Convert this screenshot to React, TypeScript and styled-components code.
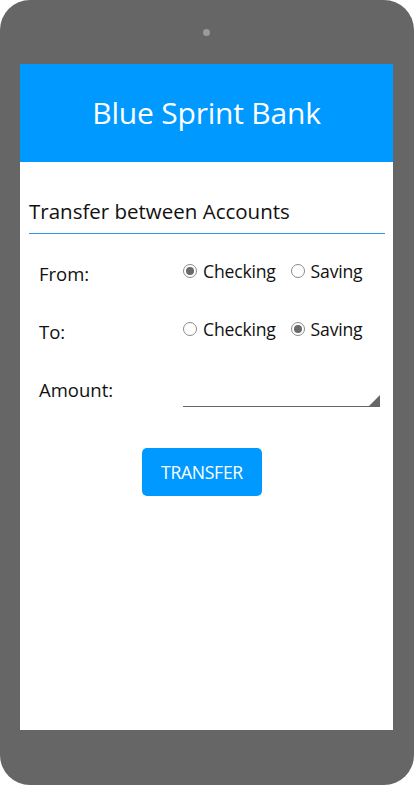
import React from "react";
import styled, { createGlobalStyle } from "styled-components";

const Global = createGlobalStyle`
  html, body { margin: 0; padding: 0; background: #ffffff; }
  body { font-family: "Open Sans", "Noto Sans", sans-serif; }
  * { box-sizing: border-box; }
`;

const Device = styled.div`
  width: 414px;
  height: 785px;
  background: #666666;
  border-radius: 30px;
  display: flex;
  flex-direction: column;
  padding: 0 21px 55px 20px;
`;

const Bezel = styled.div`
  height: 64px;
  flex: none;
  display: flex;
  align-items: center;
  justify-content: center;
`;

const Camera = styled.span`
  width: 7px;
  height: 7px;
  border-radius: 50%;
  background: #9a9a9a;
`;

const Screen = styled.div`
  flex: 1;
  background: #ffffff;
  display: flex;
  flex-direction: column;
`;

const Header = styled.header`
  height: 98px;
  flex: none;
  background: #0099ff;
  display: flex;
  align-items: center;
  justify-content: center;
`;

const Title = styled.h1`
  margin: 0 0 2px 0;
  color: #ffffff;
  font-weight: 400;
  font-size: 30px;
  letter-spacing: -0.2px;
`;

const Content = styled.main`
  padding: 0 8px 0 9px;
  display: flex;
  flex-direction: column;
`;

const SectionTitle = styled.h2`
  margin: 35px 0 0 0;
  padding: 0;
  font-size: 20.5px;
  font-weight: 400;
  color: #111111;
  line-height: 28px;
`;

const Divider = styled.div`
  height: 1px;
  margin-top: 8px;
  background: #2b9ae0;
`;

const Form = styled.div`
  display: grid;
  grid-template-columns: 144px 1fr;
  grid-auto-rows: 58px;
  align-items: center;
  padding: 10px 0 0 10px;
`;

const Label = styled.label`
  font-size: 18.5px;
  color: #111111;
`;

const RadioGroup = styled.div`
  display: flex;
  align-items: center;
  gap: 15px;
  margin-top: -4px;
`;

const Option = styled.label`
  display: flex;
  align-items: center;
  gap: 6px;
  font-size: 17.6px;
  color: #111111;
  letter-spacing: -0.2px;
`;

const Radio = styled.input.attrs({ type: "radio" })`
  appearance: none;
  margin: 0;
  width: 14px;
  height: 14px;
  border: 1px solid #8a8a8a;
  border-radius: 50%;
  background: #ffffff;
  display: grid;
  place-items: center;
  &:checked::after {
    content: "";
    width: 8px;
    height: 8px;
    border-radius: 50%;
    background: #6a6a6a;
  }
`;

const AmountBox = styled.div`
  position: relative;
  width: 197px;
  height: 24px;
  border-bottom: 1px solid #666666;
  margin-top: 12px;
`;

const AmountInput = styled.input`
  width: 100%;
  height: 100%;
  border: none;
  outline: none;
  background: transparent;
  font-size: 16px;
  font-family: inherit;
`;

const Grip = styled.span`
  position: absolute;
  right: 0;
  bottom: 0;
  width: 0;
  height: 0;
  border-style: solid;
  border-width: 0 0 11px 11px;
  border-color: transparent transparent #666666 transparent;
`;

const Actions = styled.div`
  display: flex;
  justify-content: center;
  padding: 30px 10px 0 0;
`;

const Button = styled.button`
  width: 120px;
  height: 48px;
  border: none;
  border-radius: 5px;
  background: #0099ff;
  color: #ffffff;
  font-family: inherit;
  font-size: 17.6px;
  font-weight: 400;
  letter-spacing: -0.3px;
`;

export default function App() {
  return (
    <>
      <Global />
      <Device>
        <Bezel>
          <Camera />
        </Bezel>
        <Screen>
          <Header>
            <Title>Blue Sprint Bank</Title>
          </Header>
          <Content>
            <SectionTitle>Transfer between Accounts</SectionTitle>
            <Divider />
            <Form>
              <Label>From:</Label>
              <RadioGroup>
                <Option>
                  <Radio name="from" defaultChecked />
                  Checking
                </Option>
                <Option>
                  <Radio name="from" />
                  Saving
                </Option>
              </RadioGroup>
              <Label>To:</Label>
              <RadioGroup>
                <Option>
                  <Radio name="to" />
                  Checking
                </Option>
                <Option>
                  <Radio name="to" defaultChecked />
                  Saving
                </Option>
              </RadioGroup>
              <Label>Amount:</Label>
              <AmountBox>
                <AmountInput />
                <Grip />
              </AmountBox>
            </Form>
            <Actions>
              <Button>TRANSFER</Button>
            </Actions>
          </Content>
        </Screen>
      </Device>
    </>
  );
}
